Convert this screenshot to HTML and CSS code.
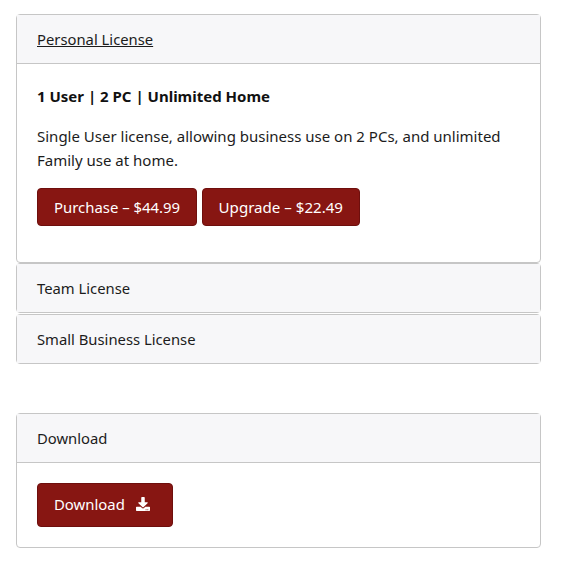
FILE: index.html
```html
<!DOCTYPE html>
<html lang="en">
<head>
    <meta charset="UTF-8">
    <title>License</title>
    <link rel="stylesheet" href="styles.css">
</head>
<body>
    <div class="accordion">
        <div class="card">
            <div class="card-header"><a href="#" class="card-link">Personal License</a></div>
            <div class="card-body">
                <p class="license-title">1 User | 2 PC | Unlimited Home</p>
                <p>Single User license, allowing business use on 2 PCs, and unlimited Family use at home.</p>
                <div class="btn-row">
                    <a href="#" class="btn">Purchase – $44.99</a>
                    <a href="#" class="btn btn-upgrade">Upgrade – $22.49</a>
                </div>
            </div>
        </div>
        <div class="card">
            <div class="card-header">Team License</div>
        </div>
        <div class="card">
            <div class="card-header">Small Business License</div>
        </div>
    </div>

    <div class="card download">
        <div class="card-header">Download</div>
        <div class="card-body download-body">
            <a href="#" class="btn btn-icon">Download
                <svg class="icon" viewBox="0 0 512 512" aria-hidden="true">
                    <path d="M216 0h80c13 0 24 11 24 24v168h88c18 0 27 22 14 34L270 378c-8 8-20 8-28 0L90 226c-13-12-4-34 14-34h88V24c0-13 11-24 24-24z"/>
                    <path d="M512 376v112c0 13-11 24-24 24H24c-13 0-24-11-24-24V376c0-13 11-24 24-24h147l49 49c20 20 52 20 72 0l49-49h147c13 0 24 11 24 24zM388 464c0-11-9-20-20-20s-20 9-20 20 9 20 20 20 20-9 20-20zm64 0c0-11-9-20-20-20s-20 9-20 20 9 20 20 20 20-9 20-20z" fill-rule="evenodd"/>
                </svg>
            </a>
        </div>
    </div>
</body>
</html>
```

FILE: styles.css
```css
* {
    margin: 0;
    padding: 0;
    box-sizing: border-box;
}

body {
    font-family: "Noto Sans", "Open Sans", sans-serif;
    font-size: 15px;
    line-height: 24px;
    color: #1c1c1c;
    background: white;
    padding: 14px 26px 0 16px;
}

.card {
    background: white;
    border: 1px solid #c6c6c6;
    border-radius: 4px;
}

.accordion .card:nth-child(3) {
    margin-top: 1px;
}

.card-header {
    background: #f7f7f9;
    padding: 12px 20px;
    height: 48px;
    font-size: 14.8px;
}

.card-body {
    border-top: 1px solid #c6c6c6;
    padding: 20px 20px 36px;
}

.card-link {
    color: #1c1c1c;
    text-decoration: underline;
}

.license-title {
    font-weight: 700;
    color: #111;
}

p {
    margin-bottom: 16px;
}

.btn-row {
    display: flex;
    gap: 5px;
}

.btn {
    display: inline-block;
    background: #871612;
    border: 1px solid #6e0f0d;
    border-radius: 4px;
    color: white;
    font-size: 14.9px;
    text-decoration: none;
    padding: 6px 15.5px 6px 16px;
    height: 38px;
}

.btn-upgrade {
    font-size: 15.1px;
    padding-right: 16px;
}

.download {
    margin-top: 49px;
}

.download-body {
    padding-bottom: 20px;
    display: flex;
}

.btn-icon {
    display: flex;
    align-items: center;
    gap: 11px;
    height: 44px;
    padding: 5px 22px 7px 16px;
}

.icon {
    width: 14px;
    height: 14px;
    margin-bottom: 1px;
    fill: white;
}
```
